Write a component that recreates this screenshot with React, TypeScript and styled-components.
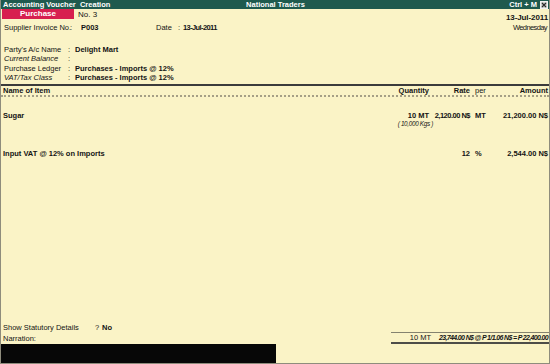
import React from 'react'
import styled, {createGlobalStyle} from 'styled-components'

const GlobalStyle = createGlobalStyle`
  html, body {
    margin: 0;
    padding: 0;
    background: #faf3c6;
  }
  body {
    font-family: 'Liberation Sans', Arial, sans-serif;
    font-size: 7.5px;
    color: #141414;
  }
`

const Screen = styled.div`
  width: 550px;
  height: 364px;
  box-sizing: border-box;
  display: flex;
  flex-direction: column;
  background: #faf3c6;
  border: 1px solid #8e8c7c;
  border-top: none;
  overflow: hidden;
`

const TitleBar = styled.div`
  height: 9px;
  margin: 0 -1px;
  padding: 0 2px 0 3px;
  display: grid;
  grid-template-columns: 1fr auto 1fr;
  align-items: center;
  background: #1f5a4e;
  color: #ffffff;
  font-weight: bold;
  line-height: 9px;
  white-space: pre;
`

const TitleRight = styled.div`
  display: flex;
  justify-content: flex-end;
  align-items: center;
  gap: 3px;
`

const Header = styled.div`
  display: flex;
  justify-content: space-between;
  padding: 0 1px 0 1px;
`

const HeaderLeft = styled.div`
  display: flex;
  flex-direction: column;
`

const VoucherRow = styled.div`
  display: flex;
  align-items: center;
  height: 10px;
`

const VoucherBadge = styled.div`
  width: 72px;
  height: 10px;
  line-height: 10px;
  text-align: center;
  background: #d71f4f;
  color: #ffffff;
  font-size: 8px;
  font-weight: bold;
`

const VoucherNo = styled.span`
  margin-left: 4px;
  font-size: 8px;
`

const SupplierRow = styled.div`
  margin-top: 4px;
  padding-left: 2px;
  display: grid;
  grid-template-columns: 66px 11px 75px 22px 5px auto;
  line-height: 9px;
`

const HeaderRight = styled.div`
  padding-top: 4px;
  display: flex;
  flex-direction: column;
  align-items: flex-end;
`

const BigDate = styled.div`
  font-size: 8px;
  font-weight: bold;
  line-height: 10px;
  letter-spacing: -0.1px;
`

const Weekday = styled.div`
  line-height: 9px;
  letter-spacing: -0.6px;
  margin-right: 1px;
`

const PartyGrid = styled.div`
  margin-top: 13px;
  padding-left: 3px;
  display: grid;
  grid-template-columns: 64px 7px auto;
  line-height: 9.4px;
`

const Label = styled.span<{ $italic?: boolean }>`
  font-style: ${p => (p.$italic ? 'italic' : 'normal')};
  white-space: nowrap;
`

const Value = styled.span<{ $narrow?: boolean }>`
  font-weight: bold;
  white-space: nowrap;
  letter-spacing: ${p => (p.$narrow ? '-0.6px' : '0')};
`

const Table = styled.div`
  flex: 1;
  display: flex;
  flex-direction: column;
  border-top: 2px solid #3b3b3b;
  margin-top: 1px;
`

const Cols = styled.div`
  display: grid;
  grid-template-columns: 1fr 58px 41px 31px 47px;
  padding: 0 1px 0 2px;
`

const HeadRow = styled(Cols)`
  line-height: 9px;
  border-bottom: 2px dotted #a59f86;
  font-weight: bold;
`

const Cell = styled.div<{ $right?: boolean; $light?: boolean; $narrow?: boolean }>`
  text-align: ${p => (p.$right ? 'right' : 'left')};
  font-weight: ${p => (p.$light ? 'normal' : 'bold')};
  letter-spacing: ${p => (p.$narrow ? '-0.5px' : '0')};
  white-space: nowrap;
`

const PerCell = styled(Cell)`
  padding-left: 5px;
`

const Items = styled.div`
  flex: 1;
  padding-top: 14px;
  display: flex;
  flex-direction: column;
  gap: 22px;
`

const ItemBlock = styled.div`
  line-height: 9px;
`

const SubLine = styled(Cols)`
  line-height: 7px;
`

const UnitNote = styled.div`
  grid-column: 2;
  text-align: right;
  margin-right: -4px;
  font-size: 6.3px;
  font-style: italic;
  letter-spacing: -0.3px;
  white-space: nowrap;
`

const Footer = styled.div`
  display: flex;
  flex-direction: column;
`

const StatRow = styled.div`
  padding-left: 2px;
  display: grid;
  grid-template-columns: 92px 7px auto;
  line-height: 9px;
`

const NarrationRow = styled.div`
  display: flex;
  align-items: center;
  padding-left: 2px;
`

const TotalBox = styled.div`
  margin-left: auto;
  margin-right: 0;
  width: 158px;
  display: flex;
  line-height: 9px;
  border-top: 1px solid #84826f;
  border-bottom: 2px solid #4d4d48;
`

const TotalQty = styled.span`
  width: 40px;
  text-align: right;
`

const TotalValue = styled.span`
  flex: 1;
  text-align: right;
  padding-right: 1px;
  font-size: 7px;
  font-weight: bold;
  font-style: italic;
  letter-spacing: -0.65px;
  white-space: nowrap;
`

const BlackBar = styled.div`
  margin-left: -1px;
  width: 276px;
  height: 19px;
  background: #070707;
`

const CloseIcon = () => (
  <svg width="8" height="8" viewBox="0 0 8 8">
    <rect x="0.5" y="0.5" width="7" height="7" fill="#d3d3cf" stroke="#f2f2f2" />
    <path d="M2 2 L6 6 M6 2 L2 6" stroke="#2b2b2b" strokeWidth="1.2" />
  </svg>
)

const App = () => {
  return (
    <>
      <GlobalStyle />
      <Screen>
        <TitleBar>
          <span>Accounting Voucher  Creation</span>
          <span>National Traders</span>
          <TitleRight>
            <span>Ctrl + M</span>
            <CloseIcon />
          </TitleRight>
        </TitleBar>

        <Header>
          <HeaderLeft>
            <VoucherRow>
              <VoucherBadge>Purchase</VoucherBadge>
              <VoucherNo>No. 3</VoucherNo>
            </VoucherRow>
            <SupplierRow>
              <Label>Supplier Invoice No.</Label>
              <span>:</span>
              <Value>P003</Value>
              <Label>Date</Label>
              <span>:</span>
              <Value $narrow>13-Jul-2011</Value>
            </SupplierRow>
          </HeaderLeft>
          <HeaderRight>
            <BigDate>13-Jul-2011</BigDate>
            <Weekday>Wednesday</Weekday>
          </HeaderRight>
        </Header>

        <PartyGrid>
          <Label>Party's A/c Name</Label>
          <span>:</span>
          <Value>Delight Mart</Value>
          <Label $italic>Current Balance</Label>
          <span>:</span>
          <span />
          <Label>Purchase Ledger</Label>
          <span>:</span>
          <Value>Purchases - Imports @ 12%</Value>
          <Label $italic>VAT/Tax Class</Label>
          <span>:</span>
          <Value>Purchases - Imports @ 12%</Value>
        </PartyGrid>

        <Table>
          <HeadRow>
            <Cell>Name of Item</Cell>
            <Cell $right>Quantity</Cell>
            <Cell $right>Rate</Cell>
            <PerCell $light>per</PerCell>
            <Cell $right>Amount</Cell>
          </HeadRow>

          <Items>
            <ItemBlock>
              <Cols>
                <Cell>Sugar</Cell>
                <Cell $right>10 MT</Cell>
                <Cell $right $narrow>2,120.00 N$</Cell>
                <PerCell>MT</PerCell>
                <Cell $right>21,200.00 N$</Cell>
              </Cols>
              <SubLine>
                <UnitNote>( 10,000 Kgs )</UnitNote>
              </SubLine>
            </ItemBlock>
            <ItemBlock>
              <Cols>
                <Cell>Input VAT @ 12% on Imports</Cell>
                <Cell />
                <Cell $right>12</Cell>
                <PerCell>%</PerCell>
                <Cell $right>2,544.00 N$</Cell>
              </Cols>
            </ItemBlock>
          </Items>

          <Footer>
            <StatRow>
              <Label>Show Statutory Details</Label>
              <span>?</span>
              <Value>No</Value>
            </StatRow>
            <NarrationRow>
              <Label>Narration:</Label>
              <TotalBox>
                <TotalQty>10 MT</TotalQty>
                <TotalValue>23,744.00 N$ @ P 1/1.06 N$ = P 22,400.00</TotalValue>
              </TotalBox>
            </NarrationRow>
            <BlackBar />
          </Footer>
        </Table>
      </Screen>
    </>
  )
}

export default App
